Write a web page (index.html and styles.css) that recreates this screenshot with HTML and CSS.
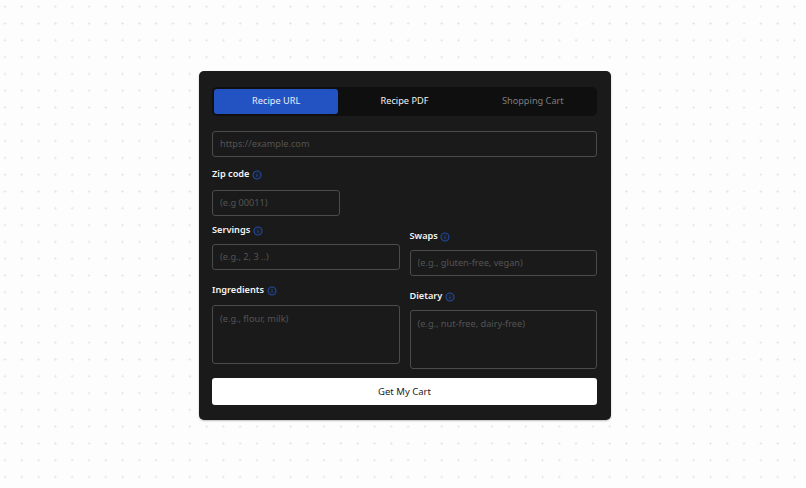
FILE: index.html
```html
<!DOCTYPE html>
<html lang="en">
<head>
<meta charset="utf-8">
<title>Get My Cart</title>
<link rel="stylesheet" href="styles.css">
</head>
<body>
<main class="card">
  <div class="tabs">
    <button class="tab tab-active" type="button">Recipe URL</button>
    <button class="tab" type="button">Recipe PDF</button>
    <button class="tab tab-muted" type="button">Shopping Cart</button>
  </div>
  <input class="field field-url" type="text" placeholder="https://example.com">
  <div class="label label-zip">Zip code
    <svg class="info" viewBox="0 0 10 10"><circle cx="5" cy="5" r="4"/><path d="M5 4.6v2.2M5 3.1v.3"/></svg>
  </div>
  <input class="field field-zip" type="text" placeholder="(e.g 00011)">
  <div class="columns">
    <div class="column">
      <div class="label">Servings
        <svg class="info" viewBox="0 0 10 10"><circle cx="5" cy="5" r="4"/><path d="M5 4.6v2.2M5 3.1v.3"/></svg>
      </div>
      <input class="field" type="text" placeholder="(e.g., 2, 3 ..)">
      <div class="label label-next">Ingredients
        <svg class="info" viewBox="0 0 10 10"><circle cx="5" cy="5" r="4"/><path d="M5 4.6v2.2M5 3.1v.3"/></svg>
      </div>
      <textarea class="field area" placeholder="(e.g., flour, milk)"></textarea>
    </div>
    <div class="column column-right">
      <div class="label">Swaps
        <svg class="info" viewBox="0 0 10 10"><circle cx="5" cy="5" r="4"/><path d="M5 4.6v2.2M5 3.1v.3"/></svg>
      </div>
      <input class="field" type="text" placeholder="(e.g., gluten-free, vegan)">
      <div class="label label-next">Dietary
        <svg class="info" viewBox="0 0 10 10"><circle cx="5" cy="5" r="4"/><path d="M5 4.6v2.2M5 3.1v.3"/></svg>
      </div>
      <textarea class="field area" placeholder="(e.g., nut-free, dairy-free)"></textarea>
    </div>
  </div>
  <button class="submit" type="button">Get My Cart</button>
</main>
</body>
</html>
```
FILE: styles.css
```css
* { box-sizing: border-box; }
html, body { height: 100%; }
body {
  margin: 0;
  display: flex;
  justify-content: center;
  padding-top: 71px;
  padding-left: 3.5px;
  background-color: #fdfdfd;
  background-image: radial-gradient(circle, #e6e6e6 0.9px, transparent 1.4px);
  background-size: 16.8px 16.8px;
  background-position: -3.4px -1.7px;
  font-family: "Noto Sans", "Open Sans", sans-serif;
}
.card {
  width: 411.5px;
  height: 349px;
  padding: 16px 13.5px 15px 13px;
  background: #1a1a1a;
  border-radius: 5px;
  box-shadow: 0 1px 2px rgba(0,0,0,.25);
  display: flex;
  flex-direction: column;
}
.tabs {
  display: flex;
  gap: 4px;
  height: 28.5px;
  padding: 2px;
  background: #0f0f0f;
  border-radius: 5px;
}
.tab {
  flex: 1;
  border: 0;
  background: transparent;
  color: #f2f2f2;
  font: 400 9.2px "Noto Sans", "Open Sans", sans-serif;
  border-radius: 3px;
  padding: 0 0 1px;
}
.tab-active { background: #2353c2; color: #e8eefc; }
.tab-muted { color: #7d7d7d; }
.field {
  display: block;
  width: 100%;
  height: 26px;
  padding: 0 7px 1px;
  background: transparent;
  border: 1px solid #4b4b4b;
  border-radius: 3px;
  color: #ddd;
  font: 400 9.2px "Noto Sans", "Open Sans", sans-serif;
  outline: none;
}
.field::placeholder { color: #545454; opacity: 1; }
.field-url { margin-top: 15.5px; }
.field-zip { width: 128px; margin-top: 9px; }
.area { height: 59px; padding-top: 6px; resize: none; }
.label {
  display: flex;
  align-items: center;
  gap: 2.5px;
  height: 14px;
  color: #f4f4f4;
  font-size: 9.2px;
  font-weight: 600;
}
.label-zip { margin-top: 9.5px; }
.label-next { margin-top: 12.75px; margin-bottom: 8px; }
.info {
  width: 10px;
  height: 10px;
  margin-top: 3px;
  fill: rgba(35, 74, 158, .12);
  stroke: #234a9e;
  stroke-width: 1.1;
}
.columns {
  display: flex;
  gap: 10px;
  margin-top: 7px;
}
.column { flex: 1; min-width: 0; display: flex; flex-direction: column; }
.column > .label:first-child { margin-bottom: 7.5px; }
.column-right { padding-top: 5.5px; }
.submit {
  margin-top: 8.25px;
  height: 27px;
  border: 0;
  border-radius: 3px;
  background: #fff;
  color: #1a1a1a;
  font: 400 9.5px "Noto Sans", "Open Sans", sans-serif;
}
```
